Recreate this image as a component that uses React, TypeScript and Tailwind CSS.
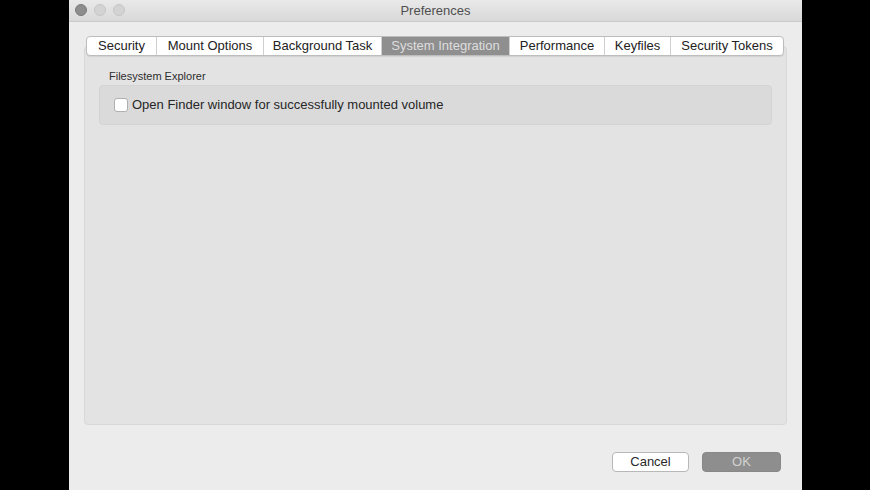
const tabs = [
  { label: "Security", w: "w-[69px]" },
  { label: "Mount Options", w: "w-[107px]" },
  { label: "Background Task", w: "w-[118px]" },
  { label: "System Integration", w: "w-[128px]", active: true },
  { label: "Performance", w: "w-[95px]" },
  { label: "Keyfiles", w: "w-[66px]" },
  { label: "Security Tokens", w: "w-[113px]" },
];

function TrafficLights() {
  return (
    <div className="absolute left-[6px] top-[4px] flex gap-[7px]">
      <span className="h-[12px] w-[12px] rounded-full border border-[#7a7a7a] bg-[#8d8d8d]" />
      <span className="h-[12px] w-[12px] rounded-full border border-[#c6c6c6] bg-[#d3d3d3]" />
      <span className="h-[12px] w-[12px] rounded-full border border-[#c6c6c6] bg-[#d3d3d3]" />
    </div>
  );
}

export default function App() {
  return (
    <div
      className="flex h-[490px] w-[870px] bg-black"
      style={{ fontFamily: '"Liberation Sans", Arial, sans-serif' }}
    >
      <div className="ml-[69px] flex h-full w-[733px] flex-col bg-[#ececec]">
        {/* title bar */}
        <div className="relative flex h-[22px] shrink-0 items-center justify-center border-b border-[#c9c9c9] bg-gradient-to-b from-[#e9e9e9] to-[#d9d9d9]">
          <TrafficLights />
          <span className="text-[13px] text-[#4f4f4f]">Preferences</span>
        </div>

        {/* tabs + content */}
        <div className="mt-[14px] flex flex-col px-[15px]">
          <div className="relative z-10 flex pl-[2px]">
            <div className="flex h-[20px] overflow-hidden rounded-[4px] border border-[#bdbdbd] bg-white shadow-[0_1px_1px_rgba(0,0,0,0.08)]">
              {tabs.map((t, i) => (
                <div
                  key={t.label}
                  className={`flex items-center justify-center text-[13px] ${t.w} ${
                    i > 0 ? "border-l border-[#d0d0d0]" : ""
                  } ${t.active ? "bg-[#8f8f8f] text-[#dedede]" : "text-[#222]"}`}
                >
                  {t.label}
                </div>
              ))}
            </div>
          </div>

          <div className="-mt-[10px] flex h-[379px] flex-col rounded-[4px] border border-[#d8d8d8] bg-[#e3e3e3] px-[14px] pt-[23px]">
            <span className="pl-[10px] text-[11px] leading-[13px] text-[#2e2e2e]">Filesystem Explorer</span>
            <div className="mt-[2px] flex h-[40px] items-center rounded-[4px] border border-[#d4d4d4] bg-[#dadada] pl-[14px]">
              <span className="h-[14px] w-[14px] rounded-[3px] border border-[#b0b0b0] bg-white" />
              <span className="ml-[4px] text-[13px] text-[#262626]">
                Open Finder window for successfully mounted volume
              </span>
            </div>
          </div>
        </div>

        {/* buttons */}
        <div className="mt-[27px] flex justify-end gap-[13px] pr-[21px]">
          <button className="flex h-[20px] w-[77px] items-center justify-center rounded-[4px] border border-[#b8b8b8] bg-white text-[13px] text-[#2a2a2a]">
            Cancel
          </button>
          <button className="flex h-[20px] w-[79px] items-center justify-center rounded-[4px] border border-[#888] bg-[#8e8e8e] text-[13px] text-[#d2d2d2]">
            OK
          </button>
        </div>
      </div>
    </div>
  );
}
